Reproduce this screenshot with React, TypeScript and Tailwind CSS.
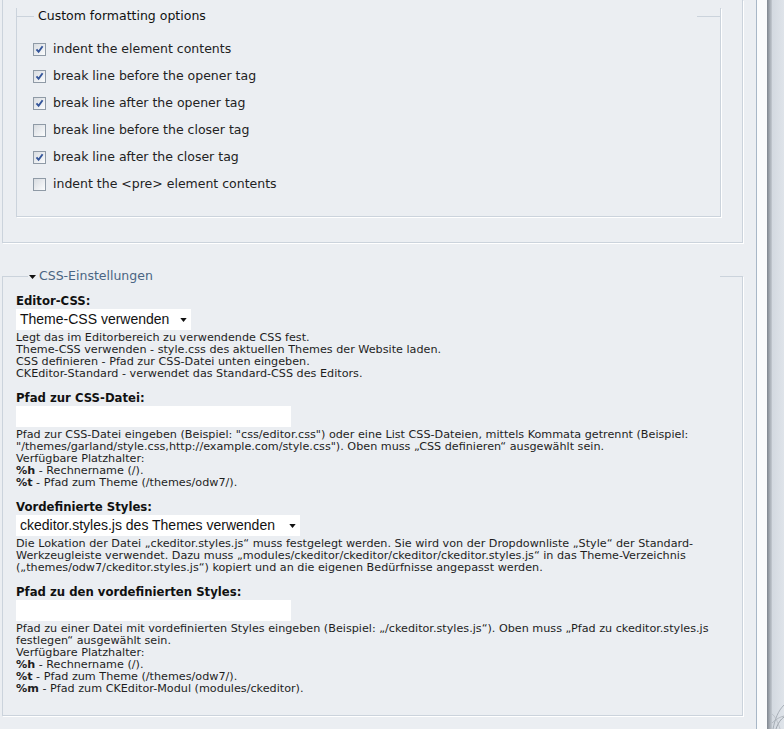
import React from 'react';

const options = [
  { label: 'indent the element contents', checked: true },
  { label: 'break line before the opener tag', checked: true },
  { label: 'break line after the opener tag', checked: true },
  { label: 'break line before the closer tag', checked: false },
  { label: 'break line after the closer tag', checked: true },
  { label: 'indent the <pre> element contents', checked: false },
];

function Checkbox({ checked }: { checked: boolean }) {
  return (
    <span className="flex h-[13px] w-[13px] shrink-0 items-center justify-center border border-[#8f9aa6] bg-linear-to-br from-[#d8dce1] to-[#fbfcfd]">
      {checked && (
        <svg viewBox="0 0 11 11" className="h-[11px] w-[11px]">
          <path d="M2.5 5.3 L4.6 7.8 L8.6 2.2" stroke="#34559a" strokeWidth="1.9" fill="none" />
        </svg>
      )}
    </span>
  );
}

function Select({ value, width }: { value: string; width: string }) {
  return (
    <div className={`flex h-[21px] items-center justify-between whitespace-nowrap bg-white pl-[4px] pr-[4px] font-['Liberation_Sans',sans-serif] text-[14px] text-[#111] ${width}`}>
      <span>{value}</span>
      <svg viewBox="0 0 8 5" className="h-[4px] w-[7px]">
        <path d="M0 0 H8 L4 5 Z" fill="#111" />
      </svg>
    </div>
  );
}

function Legend({ children, className, left, right }: { children: React.ReactNode; className: string; left: string; right: string }) {
  return (
    <div className={`-mt-[8px] flex h-[17px] items-center ${className}`}>
      <div className={`h-px bg-[#cbd3dc] ${left}`} />
      {children}
      <div className="flex-1" />
      <div className={`h-px bg-[#cbd3dc] ${right}`} />
    </div>
  );
}

function Field({ title, control, children }: { title: string; control: React.ReactNode; children: React.ReactNode }) {
  return (
    <div className="mb-[11px]">
      <div className="text-[11.7px] font-bold leading-[15px] text-[#111]">{title}</div>
      {control}
      <div className="mt-[2px] whitespace-nowrap text-[11.2px] leading-[12px] text-[#1e1e1e]">{children}</div>
    </div>
  );
}

export default function App() {
  return (
    <div className="flex h-[729px] w-full overflow-hidden font-['DejaVu_Sans',sans-serif]">
      <div className="flex w-[756px] shrink-0 flex-col bg-[#ebeef2]">
        {/* formatting options */}
        <div className="ml-[2px] mr-[13px] border-x border-b border-[#cbd3dc] pb-[25px] pl-[13px] pr-[21px] pt-[16px] shadow-[1px_1px_0_#fff]">
          <div className="border-x border-b border-[#cbd3dc] pb-[18px] shadow-[1px_1px_0_#fff]">
            <Legend className="-mx-px" left="w-[18px]" right="w-[24px]">
              <span className="px-[4px] text-[12.5px] text-[#111]">Custom formatting options</span>
            </Legend>
            <div className="mt-[11px] flex flex-col pl-[16px]">
              {options.map((o) => (
                <label key={o.label} className="flex h-[27px] items-center gap-[7px] text-[12.5px] text-[#222]">
                  <Checkbox checked={o.checked} />
                  <span>{o.label}</span>
                </label>
              ))}
            </div>
          </div>
        </div>

        {/* CSS settings */}
        <div className="ml-[2px] mr-[13px] mt-[33px] border-x border-b border-[#cbd3dc] pb-[9px] pl-[13px] pr-[16px] shadow-[1px_1px_0_#fff]">
          <Legend className="-ml-[14px] -mr-[17px]" left="w-[26px]" right="w-[23px]">
            <span className="flex items-center gap-[3px] pl-[1px] text-[12.5px] text-[#4a6583]">
              <svg viewBox="0 0 7 4" className="h-[4px] w-[7px]">
                <path d="M0 0 H7 L3.5 4 Z" fill="#111" />
              </svg>
              CSS-Einstellungen
            </span>
          </Legend>
          <div className="mt-[9px]">
            <Field title="Editor-CSS:" control={<Select value="Theme-CSS verwenden" width="w-[175px]" />}>
              Legt das im Editorbereich zu verwendende CSS fest.
              <br />
              Theme-CSS verwenden - style.css des aktuellen Themes der Website laden.
              <br />
              CSS definieren - Pfad zur CSS-Datei unten eingeben.
              <br />
              CKEditor-Standard - verwendet das Standard-CSS des Editors.
            </Field>

            <Field title="Pfad zur CSS-Datei:" control={<div className="h-[21px] w-[275px] bg-white" />}>
              Pfad zur CSS-Datei eingeben (Beispiel: "css/editor.css") oder eine List CSS-Dateien, mittels Kommata getrennt (Beispiel:
              <br />
              "/themes/garland/style.css,http://example.com/style.css"). Oben muss „CSS definieren“ ausgewählt sein.
              <br />
              Verfügbare Platzhalter:
              <br />
              <b>%h</b> - Rechnername (/).
              <br />
              <b>%t</b> - Pfad zum Theme (/themes/odw7/).
            </Field>

            <Field title="Vordefinierte Styles:" control={<Select value="ckeditor.styles.js des Themes verwenden" width="w-[284px]" />}>
              Die Lokation der Datei „ckeditor.styles.js“ muss festgelegt werden. Sie wird von der Dropdownliste „Style“ der Standard-
              <br />
              Werkzeugleiste verwendet. Dazu muss „modules/ckeditor/ckeditor/ckeditor/ckeditor.styles.js“ in das Theme-Verzeichnis
              <br />
              („themes/odw7/ckeditor.styles.js“) kopiert und an die eigenen Bedürfnisse angepasst werden.
            </Field>

            <Field title="Pfad zu den vordefinierten Styles:" control={<div className="h-[21px] w-[275px] bg-white" />}>
              Pfad zu einer Datei mit vordefinierten Styles eingeben (Beispiel: „/ckeditor.styles.js“). Oben muss „Pfad zu ckeditor.styles.js
              <br />
              festlegen“ ausgewählt sein.
              <br />
              Verfügbare Platzhalter:
              <br />
              <b>%h</b> - Rechnername (/).
              <br />
              <b>%t</b> - Pfad zum Theme (/themes/odw7/).
              <br />
              <b>%m</b> - Pfad zum CKEditor-Modul (modules/ckeditor).
            </Field>
          </div>
        </div>
      </div>

      {/* right edge */}
      <div className="w-px shrink-0 bg-[#a8b7c7]" />
      <div className="w-[10px] shrink-0 bg-[#fafbfc]" />
      <div className="w-[5px] shrink-0 bg-linear-to-r from-[#7f868f] to-[#c4cad1]" />
      <div className="flex flex-1 flex-col justify-end bg-linear-to-r from-[#d3d9e0] to-[#dfe4ea]">
        <svg viewBox="0 0 12 40" className="h-[40px] w-[12px]">
          <path d="M1 40 C3 30 6 22 12 16" stroke="#9aa2ab" strokeWidth="0.8" fill="none" />
          <path d="M0 34 C4 30 8 28 12 27" stroke="#a9b0b8" strokeWidth="0.8" fill="none" />
          <path d="M4 40 C6 34 9 30 12 28" stroke="#8f979f" strokeWidth="0.8" fill="none" />
          <path d="M0 25 C3 27 6 33 8 40" stroke="#b2b8bf" strokeWidth="0.7" fill="none" />
        </svg>
      </div>
    </div>
  );
}
